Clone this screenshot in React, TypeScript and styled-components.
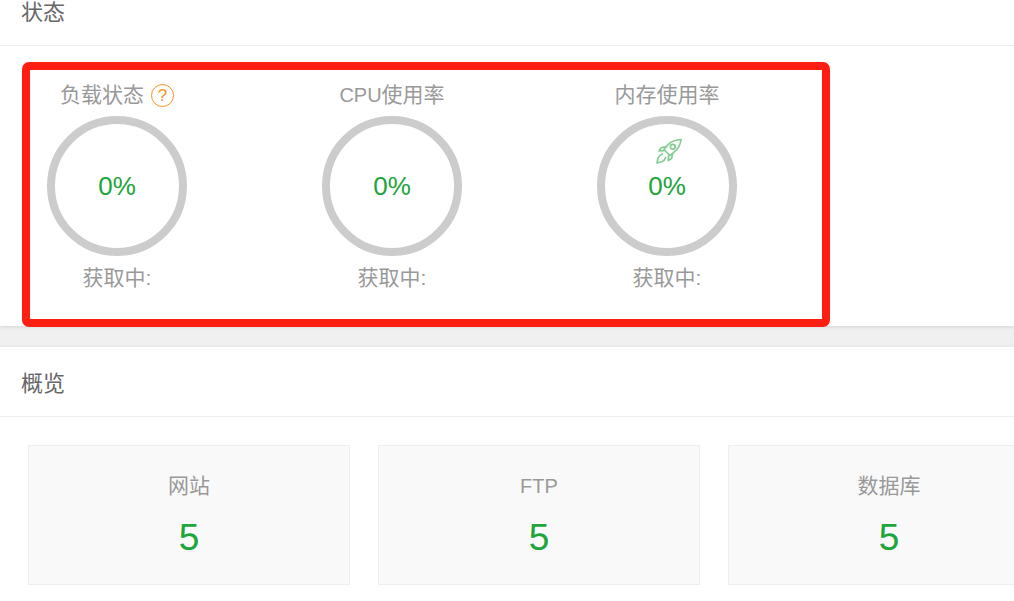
import styled, { createGlobalStyle } from "styled-components";

const GlobalStyle = createGlobalStyle`
  html, body {
    margin: 0;
    height: 601px;
    overflow: hidden;
    background: #f0f0f0;
    font-family: "Liberation Sans", "Noto Sans CJK SC", sans-serif;
  }
`;

// The page is scrolled a little, the first header is cut off at the top
const Page = styled.div`
  margin-top: -24px;
  width: 1014px;
  height: 625px;
  overflow: hidden;
`;

const Section = styled.section`
  background: #fff;
  box-shadow: 0 1px 4px rgba(0, 0, 0, 0.12);

  & + & {
    margin-top: 21px;
  }
`;

const SectionHeader = styled.h2`
  margin: 0;
  height: 70px;
  box-sizing: border-box;
  padding: 20px 0 0 21px;
  border-bottom: 1px solid #eee;
  font-size: 22px;
  line-height: 34px;
  font-weight: 400;
  color: #666;
`;

const StatusBody = styled.div`
  position: relative;
  height: 280px;
  box-sizing: border-box;
  padding: 34px 0 0 47px;
  display: flex;
  gap: 135px;
`;

// Red annotation drawn over the screenshot
const Highlight = styled.div`
  position: absolute;
  left: 22px;
  top: 16px;
  width: 808px;
  height: 265px;
  box-sizing: border-box;
  border: 8px solid #ff1f12;
  border-radius: 7px;
  pointer-events: none;
`;

const Gauge = styled.div`
  width: 140px;
  display: flex;
  flex-direction: column;
  align-items: center;
`;

const GaugeTitle = styled.div`
  height: 36px;
  white-space: nowrap;
  display: flex;
  align-items: flex-start;
  gap: 7px;
  font-size: 21px;
  line-height: 30px;
  color: #999;
`;

// Latin letters run a little narrower than the CJK text beside them
const Latin = styled.span`
  font-size: 20px;
`;

const HelpIcon = styled.span`
  width: 23px;
  height: 23px;
  margin-top: 4px;
  box-sizing: border-box;
  border: 1px solid #f7931e;
  border-radius: 50%;
  display: flex;
  align-items: center;
  justify-content: center;
  font-size: 17px;
  line-height: 1;
  color: #f7931e;
`;

const Ring = styled.div`
  position: relative;
  width: 140px;
  height: 140px;
  box-sizing: border-box;
  border: 8px solid #ccc;
  border-radius: 50%;
  display: flex;
  align-items: center;
  justify-content: center;
  font-size: 26px;
  color: #20a53a;

  &::before,
  &::after {
    content: "";
    position: absolute;
    left: 61.5px;
    width: 1px;
    height: 8px;
    background: #c3d0c5;
  }
  &::before {
    top: -8px;
  }
  &::after {
    bottom: -8px;
  }
`;

const Rocket = styled.svg`
  position: absolute;
  left: 51px;
  top: 14px;
  width: 26px;
  height: 26px;
  fill: none;
  stroke: #20a53a;
  stroke-width: 1.7;
  stroke-linejoin: round;
  stroke-linecap: round;
  opacity: 0.55;
`;

const GaugeStatus = styled.div`
  margin-top: 7px;
  font-size: 21px;
  line-height: 30px;
  color: #999;
`;

const CardRow = styled.div`
  height: 184px;
  box-sizing: border-box;
  padding: 28px 0 0 28px;
  display: flex;
  gap: 28px;
  overflow: hidden;
`;

const Card = styled.div`
  flex: 0 0 322px;
  height: 140px;
  box-sizing: border-box;
  border: 1px solid #eee;
  background: #f9f9f9;
  display: flex;
  flex-direction: column;
  align-items: center;
  padding-top: 25px;
`;

const CardLabel = styled.div`
  font-size: 21px;
  line-height: 30px;
  color: #999;
`;

const CardValue = styled.div`
  margin-top: 14px;
  font-size: 37px;
  line-height: 46px;
  color: #20a53a;
`;

const App = () => (
  <Page>
    <GlobalStyle />
    <Section>
      <SectionHeader>状态</SectionHeader>
      <StatusBody>
        <Gauge>
          <GaugeTitle>
            负载状态
            <HelpIcon>?</HelpIcon>
          </GaugeTitle>
          <Ring>0%</Ring>
          <GaugeStatus>获取中:</GaugeStatus>
        </Gauge>
        <Gauge>
          <GaugeTitle>
            <span>
              <Latin>CPU</Latin>使用率
            </span>
          </GaugeTitle>
          <Ring>0%</Ring>
          <GaugeStatus>获取中:</GaugeStatus>
        </Gauge>
        <Gauge>
          <GaugeTitle>内存使用率</GaugeTitle>
          <Ring>
            <Rocket viewBox="0 0 26 26">
              <path d="M25 1.5c-5.5.3-10 2-13.2 5.4L8 11.5l6 6 4.6-3.8C22.5 10.5 24.5 6.5 25 1.5z" />
              <circle cx="16.8" cy="8.8" r="2.4" />
              <path d="M9.5 8.8 5.2 9.6 3 13l5-.3" />
              <path d="M16.5 16l-.8 4.3-3.4 2.2.3-5" />
              <path d="M6.5 16c-2 .6-3.6 2-4.5 4.2L1 25l4.6-1.2c2-.8 3.4-2.4 4-4.4" />
            </Rocket>
            0%
          </Ring>
          <GaugeStatus>获取中:</GaugeStatus>
        </Gauge>
        <Highlight />
      </StatusBody>
    </Section>
    <Section>
      <SectionHeader>概览</SectionHeader>
      <CardRow>
        <Card>
          <CardLabel>网站</CardLabel>
          <CardValue>5</CardValue>
        </Card>
        <Card>
          <CardLabel>
            <Latin>FTP</Latin>
          </CardLabel>
          <CardValue>5</CardValue>
        </Card>
        <Card>
          <CardLabel>数据库</CardLabel>
          <CardValue>5</CardValue>
        </Card>
      </CardRow>
    </Section>
  </Page>
);

export default App;
